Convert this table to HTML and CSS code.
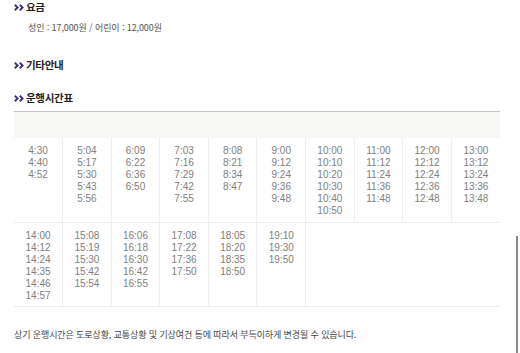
FILE: index.html
```html
<!DOCTYPE html>
<html lang="ko">
<head>
<meta charset="utf-8">
<link rel="stylesheet" href="styles.css">
</head>
<body>
<div class="page">
  <h3 class="heading"><svg class="arrows" viewBox="0 0 11 7" width="11" height="7"><path d="M0.8 0.8 L3.6 3.5 L0.8 6.2 M5.8 0.8 L8.6 3.5 L5.8 6.2" fill="none" stroke="#3d3182" stroke-width="1.9"/></svg>요금</h3>
  <p class="fare">성인 : 17,000원 / 어린이 : 12,000원</p>
  <h3 class="heading h-etc"><svg class="arrows" viewBox="0 0 11 7" width="11" height="7"><path d="M0.8 0.8 L3.6 3.5 L0.8 6.2 M5.8 0.8 L8.6 3.5 L5.8 6.2" fill="none" stroke="#3d3182" stroke-width="1.9"/></svg>기타안내</h3>
  <h3 class="heading h-time"><svg class="arrows" viewBox="0 0 11 7" width="11" height="7"><path d="M0.8 0.8 L3.6 3.5 L0.8 6.2 M5.8 0.8 L8.6 3.5 L5.8 6.2" fill="none" stroke="#3d3182" stroke-width="1.9"/></svg>운행시간표</h3>
  <table class="timetable">
    <thead>
      <tr><th></th><th></th><th></th><th></th><th></th><th></th><th></th><th></th><th></th><th></th></tr>
    </thead>
    <tbody>
      <tr class="row1">
        <td>4:30<br>4:40<br>4:52</td>
        <td>5:04<br>5:17<br>5:30<br>5:43<br>5:56</td>
        <td>6:09<br>6:22<br>6:36<br>6:50</td>
        <td>7:03<br>7:16<br>7:29<br>7:42<br>7:55</td>
        <td>8:08<br>8:21<br>8:34<br>8:47</td>
        <td>9:00<br>9:12<br>9:24<br>9:36<br>9:48</td>
        <td>10:00<br>10:10<br>10:20<br>10:30<br>10:40<br>10:50</td>
        <td>11:00<br>11:12<br>11:24<br>11:36<br>11:48</td>
        <td>12:00<br>12:12<br>12:24<br>12:36<br>12:48</td>
        <td class="last">13:00<br>13:12<br>13:24<br>13:36<br>13:48</td>
      </tr>
      <tr class="row2">
        <td>14:00<br>14:12<br>14:24<br>14:35<br>14:46<br>14:57</td>
        <td>15:08<br>15:19<br>15:30<br>15:42<br>15:54</td>
        <td>16:06<br>16:18<br>16:30<br>16:42<br>16:55</td>
        <td>17:08<br>17:22<br>17:36<br>17:50</td>
        <td>18:05<br>18:20<br>18:35<br>18:50</td>
        <td>19:10<br>19:30<br>19:50</td>
        <td class="last" colspan="4"></td>
      </tr>
    </tbody>
  </table>
  <p class="note">상기 운행시간은 도로상황, 교통상황 및 기상여건 등에 따라서 부득이하게 변경될 수 있습니다.</p>
</div>
<div class="scrollbar"></div>
</body>
</html>
```

FILE: styles.css
```css
html, body {
  margin: 0;
  padding: 0;
  background: #ffffff;
}
body {
  width: 520px;
  height: 353px;
  overflow: hidden;
  font-family: "Noto Sans CJK KR", "Noto Sans", sans-serif;
  color: #333;
  position: relative;
}
.page {
  padding: 0 20px 0 14px;
}
.heading {
  margin: 0;
  display: flex;
  align-items: center;
  font-size: 10.5px;
  font-weight: 700;
  line-height: 14px;
  letter-spacing: -0.3px;
  color: #222;
}
.arrows {
  flex: none;
  margin-right: 1px;
}
.fare {
  margin: 8px 0 0 14px;
  font-size: 9px;
  line-height: 12px;
  color: #555;
  letter-spacing: -0.1px;
}
.h-etc {
  margin-top: 24px;
}
.h-time {
  margin-top: 19px;
}
.timetable {
  margin-top: 6px;
  width: 486px;
  border-collapse: collapse;
  table-layout: fixed;
  border-top: 1.5px solid #c4c4c4;
  border-bottom: 1px solid #ececec;
}
.timetable th {
  height: 26px;
  background: #f8f9f5;
  padding: 0;
}
.timetable td {
  vertical-align: top;
  text-align: center;
  font-family: "Liberation Sans", Arial, sans-serif;
  font-size: 10px;
  line-height: 12px;
  color: #808080;
  border-right: 1px solid #eeeeee;
}
.timetable td.last {
  border-right: none;
}
.row1 td {
  padding: 7px 0 5px;
  border-bottom: 1px solid #ececec;
}
.row2 td {
  padding: 7px 0 4px;
}
.note {
  margin: 22px 0 0;
  font-size: 9px;
  line-height: 12px;
  color: #444;
  letter-spacing: -0.1px;
}
.scrollbar {
  position: absolute;
  left: 516px;
  top: 236px;
  width: 2px;
  height: 117px;
  background: #8a8a8a;
}
```
